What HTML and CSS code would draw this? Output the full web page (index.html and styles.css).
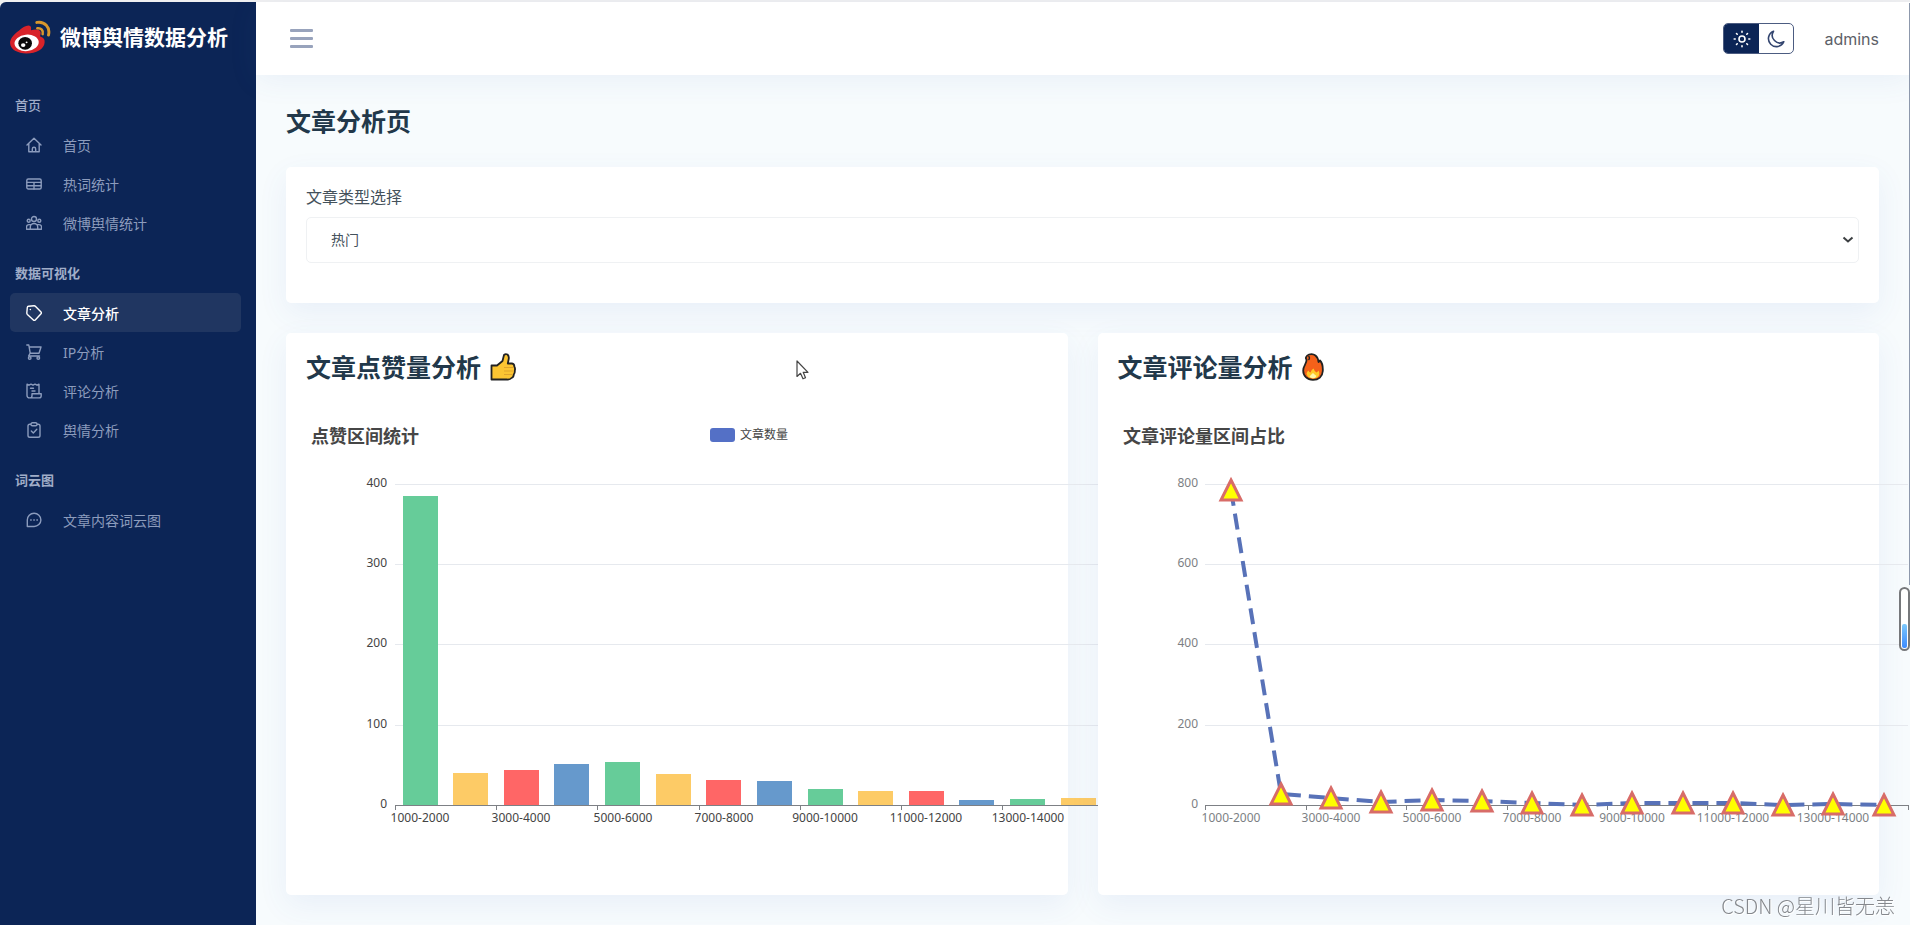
FILE: index.html
```html
<!DOCTYPE html>
<html lang="zh-CN">
<head>
<meta charset="utf-8">
<meta name="viewport" content="width=device-width, initial-scale=1">
<title>微博舆情数据分析</title>
<link rel="stylesheet" href="styles.css">
</head>
<body>
<div class="app">
  <aside class="sidebar">
    <a class="brand" href="#">
      <svg class="brand-logo" viewBox="0 0 42 36" aria-hidden="true">
        <path d="M9 11C13 7 19 4 21 6.500 22 8 21.500 9.500 21.500 10.500 27 9 31 9.500 31.500 13 31.500 15 30.500 16 31 17 34.500 18 36 20 35.500 23.500 35 30 27 34.500 17 34.500 8 34.500 0 30.500 0 23.500 0 19 4 14.500 9 11z" fill="#d8232a"/>
        <ellipse cx="17" cy="23.500" rx="12.500" ry="8.500" fill="#fff" transform="rotate(-6 17 23.500)"/>
        <ellipse cx="15.500" cy="24" rx="7" ry="6.500" fill="#0a0a0a"/>
        <ellipse cx="13.500" cy="25.800" rx="2.300" ry="1.900" fill="#fff"/>
        <circle cx="17" cy="23" r="1" fill="#fff"/>
        <path d="M28 8.500c4-.5 6.500 2 5.500 6" fill="none" stroke="#d9972c" stroke-width="2.600" stroke-linecap="round"/>
        <path d="M27.500 2.500c8-1.500 14 5 12 13" fill="none" stroke="#d9972c" stroke-width="3" stroke-linecap="round"/>
      </svg>
      <span class="brand-name">微博舆情数据分析</span>
    </a>
    <nav class="nav">
      <h2 class="nav-label">首页</h2>
      <a class="nav-link" href="#">
        <svg class="nav-icon" viewBox="0 0 16 16"><path d="M1 8 8 1.200 15 8M2.800 6.500V14.800H13.200V6.500M6.300 14.800V12a1.700 1.700 0 0 1 3.400 0V14.800"/></svg>
        首页</a>
      <a class="nav-link" href="#">
        <svg class="nav-icon" viewBox="0 0 16 16"><rect x=".8" y="3" width="14.400" height="10" rx="1.500"/><path d="M1 6.400H15M1 9.700H15M8 6.400V13"/></svg>
        热词统计</a>
      <a class="nav-link" href="#">
        <svg class="nav-icon" viewBox="0 0 16 16"><circle cx="8" cy="4" r="2.500"/><circle cx="2.700" cy="5.800" r="1.500"/><circle cx="13.300" cy="5.800" r="1.500"/><path d="M4.300 14.300V12a3.700 3.500 0 0 1 7.400 0V14.300zM4.500 9.600H3a2.500 2.500 0 0 0-2.500 2.500V14.300H4.300M11.500 9.600H13a2.500 2.500 0 0 1 2.500 2.500V14.300H11.700"/></svg>
        微博舆情统计</a>
      <h2 class="nav-label nav-label-strong">数据可视化</h2>
      <a class="nav-link nav-link-active" href="#" aria-current="page">
        <svg class="nav-icon nav-icon-tag" viewBox="0 0 16 16"><path d="M2.500 1.300 8 .8a2 2 0 0 1 1.600.6L14.800 6.700a1.700 1.700 0 0 1 0 2.400L9.500 14.800a1.700 1.700 0 0 1-2.400 0L1.400 9.500A2 2 0 0 1 .8 8L1.300 2.500a1.300 1.300 0 0 1 1.200-1.200z"/><path d="M4.300 4.500h.1"/></svg>
        文章分析</a>
      <a class="nav-link" href="#">
        <svg class="nav-icon" viewBox="0 0 16 16"><path d="M.8 1H2.800L4.200 9.200H13L15 3H3.200M4.200 9.200 2.600 12H13.500"/><circle cx="3.700" cy="14" r="1.300"/><circle cx="12.300" cy="14" r="1.300"/></svg>
        IP分析</a>
      <a class="nav-link" href="#">
        <svg class="nav-icon" viewBox="0 0 16 16"><path d="M1 1.200 3 2.200 5 1.200 7 2.200 9 1.200 11 2.200 13 1.200V10.500M1 1.200V12.500a2.400 2.400 0 0 0 2.400 2.400H13a2.200 2.200 0 0 0 2.200-2.200V10.800H6V12.700a2.200 2.200 0 0 1-2.200 2.200M4.500 5.200H7.500M6 8H9"/></svg>
        评论分析</a>
      <a class="nav-link" href="#">
        <svg class="nav-icon" viewBox="0 0 16 16"><rect x="2" y="2.200" width="12" height="13" rx="1.800"/><rect x="5" y=".8" width="6" height="3" rx="1.400" class="nav-icon-clip"/><path d="M5.300 9 7.300 11 10.800 7.300"/></svg>
        舆情分析</a>
      <h2 class="nav-label nav-label-strong">词云图</h2>
      <a class="nav-link" href="#">
        <svg class="nav-icon" viewBox="0 0 16 16"><path d="M1.300 14.500V8a6.800 6.600 0 1 1 6.700 6.500z"/><path d="M4.700 8h.5M7.800 8h.5M10.900 8h.5"/></svg>
        文章内容词云图</a>
    </nav>
  </aside>

  <div class="page">
    <header class="topbar">
      <button class="menu-button" type="button" aria-label="菜单">
        <span></span><span></span><span></span>
      </button>
      <div class="topbar-right">
        <div class="theme-toggle">
          <button class="theme-button theme-button-on" type="button" aria-label="浅色">
            <svg viewBox="0 0 18 18"><circle cx="9" cy="9" r="3"/><path d="M9 1.200v1M9 15.800v1M1.200 9h1M15.800 9h1M3.500 3.500l.7.700M13.800 13.800l.7.700M3.500 14.500l.7-.7M13.800 4.200l.7-.7"/></svg>
          </button>
          <button class="theme-button" type="button" aria-label="深色">
            <svg viewBox="0 0 18 18"><path d="M6.500 1.200A8 8 0 1 0 16.800 11.800 7.600 7.600 0 0 1 6.500 1.200z"/></svg>
          </button>
        </div>
        <a class="user" href="#">admins</a>
      </div>
    </header>

    <main class="content">
      <h1 class="title">文章分析页</h1>

      <section class="card filter-card">
        <label class="field-label" for="type">文章类型选择</label>
        <div class="select-box">
          <select id="type" class="select"><option>热门</option></select>
          <svg class="select-arrow" viewBox="0 0 12 8" aria-hidden="true"><path d="M1.500 1.500 6 5.500 10.500 1.500"/></svg>
        </div>
      </section>

      <div class="charts">
        <section class="card">
          <h2 class="title card-title">文章点赞量分析
            <svg class="thumb" viewBox="0 0 26 28" role="img" aria-label="点赞"><path d="M1.500 12.500H7L12.500 8 14 2Q15.500.6 17.500 1.500 19.500 3.500 18.500 7L17.800 10.500H22Q24.500 11 24.300 13.500 25.500 15.500 24.800 17.500 25 20 23.800 21.500 23.500 24.500 21.500 25 20 26.800 17 26.500H1.500z" fill="#fcc532" stroke="#222" stroke-width="1.800" stroke-linejoin="round"/><path d="M14 14.500H23M14 18H23.500M14 21.500H22.500" stroke="#e0a52c" stroke-width="1"/></svg>
          </h2>
          <div class="chart">
            <svg class="chart-svg chart-bars" width="800" height="450" role="img" aria-label="点赞区间统计">
              <text class="chart-title" x="5" y="19">点赞区间统计</text>
              <rect x="404" y="4" width="25" height="14" rx="3" fill="#5470c6"/>
              <text class="legend" x="434" y="15">文章数量</text>
              <path class="grid" d="M89 60.500H800M89 140.500H800M89 220.500H800M89 301.500H800"/>
              <g class="y-axis">
                <text x="81" y="63">400</text><text x="81" y="143">300</text><text x="81" y="223">200</text><text x="81" y="304">100</text><text x="81" y="384">0</text>
              </g>
              <g fill="#66cc99"><rect x="97" y="72" width="35" height="309"/><rect x="299" y="338" width="35" height="43"/><rect x="502" y="365" width="35" height="16"/><rect x="704" y="375" width="35" height="6"/></g>
              <g fill="#fdcb66"><rect x="147" y="349" width="35" height="32"/><rect x="350" y="350" width="35" height="31"/><rect x="552" y="367" width="35" height="14"/><rect x="755" y="374" width="35" height="7"/></g>
              <g fill="#ff6666"><rect x="198" y="346" width="35" height="35"/><rect x="400" y="356" width="35" height="25"/><rect x="603" y="367" width="35" height="14"/></g>
              <g fill="#6699cc"><rect x="248" y="340" width="35" height="41"/><rect x="451" y="357" width="35" height="24"/><rect x="653" y="376" width="35" height="5"/></g>
              <path class="axis" d="M89 381.500H800M89.500 381v5M190.500 381v5M291.500 381v5M393.500 381v5M494.500 381v5M595.500 381v5M696.500 381v5"/>
              <g class="x-axis">
                <text x="114" y="398">1000-2000</text><text x="215" y="398">3000-4000</text><text x="317" y="398">5000-6000</text><text x="418" y="398">7000-8000</text><text x="519" y="398">9000-10000</text><text x="620" y="398">11000-12000</text><text x="722" y="398">13000-14000</text>
              </g>
            </svg>
          </div>
        </section>

        <section class="card">
          <h2 class="title card-title">文章评论量分析
            <svg class="flame" viewBox="0 0 22 28" role="img" aria-label="热门"><path d="M7 1.500C12 0 16 3 16.500 9L18 7.500C20.500 10 21 14 20.800 18 20.500 23.500 16.500 26.800 11 26.800 5 26.800 1.200 23 1.200 17.500 1.200 12.500 5 10.500 4.500 6.500 3.200 5.500 4 2.500 7 1.500z" fill="#f4611a" stroke="#222" stroke-width="1.800" stroke-linejoin="round"/><path d="M6.500 3Q8.500 5 6.500 7" fill="none" stroke="#222" stroke-width="1.300"/><path d="M4.500 20.500Q5 18.500 6.500 17.500 7 19.500 8.500 19.500 9.500 16.500 11.500 15.500 12.500 18.500 14.500 19.500 16 18.500 16.500 17.500 18 20 17 22.500 15.500 25.500 11 25.500 5.500 25.300 4.500 20.500z" fill="#ffc928"/><path d="M7.500 23.500Q10 20.500 11 20 13 22 14.500 23 13.500 25.300 11 25.300 8.500 25.300 7.500 23.500z" fill="#fff6a8"/></svg>
          </h2>
          <div class="chart">
            <svg class="chart-svg chart-line" width="792" height="450" role="img" aria-label="文章评论量区间占比">
              <defs><path id="mark" d="M0-10 10 10H-10z" fill="#ffff00" stroke="#d86c68" stroke-width="3"/></defs>
              <text class="chart-title" x="5" y="19">文章评论量区间占比</text>
              <path class="grid" d="M87 60.500H790M87 140.500H790M87 220.500H790M87 301.500H790"/>
              <g class="y-axis">
                <text x="80" y="63">800</text><text x="80" y="143">600</text><text x="80" y="223">400</text><text x="80" y="304">200</text><text x="80" y="384">0</text>
              </g>
              <path class="axis" d="M87 381.500H791M87.500 381v5M188.500 381v5M288.500 381v5M389.500 381v5M489.500 381v5M589.500 381v5M690.500 381v5M790.500 381v5"/>
              <g class="x-axis">
                <text x="113" y="398">1000-2000</text><text x="213" y="398">3000-4000</text><text x="314" y="398">5000-6000</text><text x="414" y="398">7000-8000</text><text x="514" y="398">9000-10000</text><text x="615" y="398">11000-12000</text><text x="715" y="398">13000-14000</text>
              </g>
              <polyline class="series" points="113,66 163,370 213,374 263,378 314,376 364,377 414,379 464,381 514,379 565,379 615,379 665,381 715,380 766,381"/>
              <use href="#mark" x="113" y="66"/><use href="#mark" x="163" y="370"/><use href="#mark" x="213" y="374"/><use href="#mark" x="263" y="378"/><use href="#mark" x="314" y="376"/><use href="#mark" x="364" y="377"/><use href="#mark" x="414" y="379"/><use href="#mark" x="464" y="381"/><use href="#mark" x="514" y="379"/><use href="#mark" x="565" y="379"/><use href="#mark" x="615" y="379"/><use href="#mark" x="665" y="381"/><use href="#mark" x="715" y="380"/><use href="#mark" x="766" y="381"/>
            </svg>
          </div>
        </section>
      </div>
    </main>
  </div>
</div>

<div class="edge-line"></div>
<div class="battery"><span class="battery-level"></span></div>
<svg class="pointer" viewBox="0 0 13 20" aria-hidden="true"><path d="M1 1V16.500L4.500 13.300 7 18.800 9.500 17.700 7.200 12.300H12z" fill="#fff" stroke="#444" stroke-width="1.200" stroke-linejoin="round"/></svg>
<div class="watermark">CSDN @星川皆无恙</div>
</body>
</html>
```
FILE: styles.css
```css
* {
  box-sizing: border-box;
}

body {
  margin: 0;
  background: #f0f0f1;
  color: #22384a;
  font-family: "Noto Sans", "Noto Sans CJK SC", sans-serif;
  font-size: 14px;
  overflow-x: hidden;
}

a {
  color: inherit;
  text-decoration: none;
}

button {
  margin: 0;
  padding: 0;
  border: 0;
  background: none;
}

.app {
  display: flex;
  min-height: 100vh;
  padding-top: 2px;
  overflow: hidden;
}

/* Sidebar */
.sidebar {
  flex: 0 0 256px;
  padding: 0 15px 0 10px;
  border-top-left-radius: 6px;
  background: #0c2556;
  color: #8c9cbd;
}

.brand {
  display: flex;
  align-items: center;
  gap: 9px;
  height: 70px;
}

.brand-logo {
  flex: none;
  width: 41px;
  height: 35px;
}

.brand-name {
  color: #fff;
  font-size: 21px;
  font-weight: 700;
  line-height: 30px;
  white-space: nowrap;
}

.nav {
  display: flex;
  flex-direction: column;
  padding-top: 2px;
}

.nav-label {
  margin: 0;
  padding: 21px 5px 10px;
  color: #a0adc8;
  font-size: 13px;
  font-weight: 500;
  line-height: 20px;
}

.nav-label-strong {
  font-weight: 700;
}

.nav-link {
  display: flex;
  align-items: center;
  gap: 21px;
  height: 39px;
  padding: 0 16px;
  border-radius: 5px;
  font-size: 14px;
}

.nav-link-active {
  background: #203661;
  color: #fff;
  font-weight: 500;
}

.nav-icon {
  flex: none;
  width: 16px;
  height: 16px;
  fill: none;
  stroke: currentColor;
  stroke-width: 1.4;
  stroke-linejoin: round;
  stroke-linecap: round;
}

.nav-icon-clip {
  fill: #0c2556;
}

/* Top bar */
.page {
  flex: 1;
  min-width: 0;
  background: #f7fbfd;
}

.topbar {
  display: flex;
  align-items: center;
  justify-content: space-between;
  height: 73px;
  padding: 0 31px 0 34px;
  background: #fff;
  box-shadow: 0 5px 30px rgba(60, 100, 180, 0.08);
}

.menu-button {
  display: flex;
  flex-direction: column;
  gap: 5px;
  width: 23px;
}

.menu-button span {
  height: 3px;
  border-radius: 1px;
  background: #98a3bc;
}

.topbar-right {
  display: flex;
  align-items: center;
  gap: 30px;
}

.theme-toggle {
  display: flex;
  width: 71px;
  height: 31px;
  border: 1px solid #4c5c81;
  border-radius: 5px;
  overflow: hidden;
}

.theme-button {
  display: flex;
  flex: 1;
  align-items: center;
  justify-content: center;
  color: #33456f;
}

.theme-button-on {
  background: #0c2556;
  color: #fff;
}

.theme-button svg {
  width: 18px;
  height: 18px;
  fill: none;
  stroke: currentColor;
  stroke-width: 1.6;
  stroke-linecap: round;
  stroke-linejoin: round;
}

.user {
  color: #5c6068;
  font-family: Inter, sans-serif;
  font-size: 16px;
}

/* Content */
.content {
  padding: 28px 31px 24px 30px;
}

.title {
  margin: 0;
  color: #22384a;
  font-size: 25px;
  font-weight: 700;
  line-height: 36px;
}

.card {
  min-width: 0;
  padding: 20px;
  border-radius: 5px;
  background: #fff;
  box-shadow: 0 10px 30px rgba(60, 100, 190, 0.08);
}

.filter-card {
  display: flex;
  flex-direction: column;
  gap: 9px;
  margin-top: 28px;
  padding: 19px 20px 40px;
}

.field-label {
  color: #44515b;
  font-size: 16px;
  line-height: 22px;
}

.select-box {
  display: grid;
  align-items: center;
}

.select {
  grid-area: 1 / 1;
  width: 100%;
  height: 46px;
  padding: 0 24px 2px;
  border: 1px solid #eff1f3;
  border-radius: 5px;
  appearance: none;
  background: #fff;
  color: #44515b;
  font: inherit;
}

.select-arrow {
  grid-area: 1 / 1;
  justify-self: end;
  width: 12px;
  height: 8px;
  margin-right: 5px;
  fill: none;
  stroke: #3c3f42;
  stroke-width: 2;
  pointer-events: none;
}

.charts {
  display: grid;
  grid-template-columns: 1fr 1fr;
  gap: 30px;
  margin-top: 30px;
}

.charts .card {
  padding: 16px 20px 21px;
}

.card-title {
  display: flex;
  align-items: center;
  gap: 9px;
}

.thumb {
  width: 26px;
  height: 28px;
}

.flame {
  width: 22px;
  height: 28px;
}

.chart {
  margin-top: 39px;
}

.chart-svg {
  display: block;
}

.chart-title {
  fill: #464646;
  font-size: 18px;
  font-weight: 700;
}

.chart-bars {
  fill: #444;
}

.chart-line {
  fill: #7c7f84;
}

.legend,
.y-axis,
.x-axis {
  font-size: 12px;
}

.y-axis {
  text-anchor: end;
}

.x-axis {
  text-anchor: middle;
}

.grid {
  stroke: #e6e9ee;
}

.axis {
  stroke: #7d8085;
}

.series {
  fill: none;
  stroke: #5872b8;
  stroke-width: 4;
  stroke-dasharray: 16 8;
}

/* Overlays */
.edge-line {
  position: fixed;
  top: 3px;
  right: 0;
  width: 1px;
  height: 582px;
  background: #8d98ac;
}

.battery {
  position: fixed;
  top: 587px;
  right: 0;
  display: flex;
  align-items: flex-end;
  width: 11px;
  height: 64px;
  padding: 1px;
  border: 2px solid #76787b;
  border-radius: 6px;
  background: #fff;
}

.battery-level {
  flex: 1;
  height: 24px;
  border-radius: 2px;
  background: linear-gradient(#7cc8fb, #3d8bff);
}

.pointer {
  position: fixed;
  top: 360px;
  left: 796px;
  width: 13px;
  height: 20px;
}

.watermark {
  position: fixed;
  right: 15px;
  bottom: 4px;
  color: #85888d;
  font-family: "Noto Sans CJK SC", sans-serif;
  font-size: 20px;
  font-weight: 300;
  line-height: 30px;
  text-shadow: 1px 1px 0 #fff;
}
```
